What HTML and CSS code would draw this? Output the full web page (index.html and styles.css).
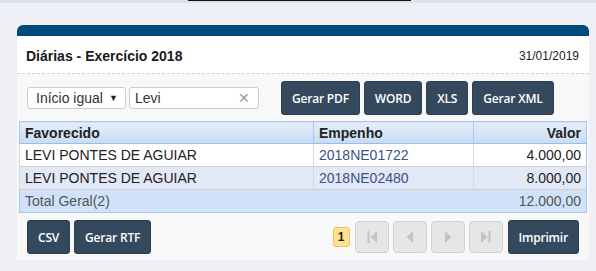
FILE: index.html
```html
<!DOCTYPE html>
<html lang="pt">
<head>
<meta charset="utf-8">
<link rel="stylesheet" href="styles.css">
</head>
<body>
<div class="topstrip"><div class="topstrip-dark"></div></div>
<div class="panel">
  <div class="panel-bar"></div>
  <div class="panel-head">
    <span class="title">Diárias - Exercício 2018</span>
    <span class="date">31/01/2019</span>
  </div>
  <div class="panel-body">
    <div class="filters">
      <div class="select"><span>Início igual</span><span class="caret">▼</span></div>
      <div class="input"><span>Levi</span><span class="clear">✕</span></div>
      <div class="btns">
        <button class="btn">Gerar PDF</button>
        <button class="btn">WORD</button>
        <button class="btn">XLS</button>
        <button class="btn">Gerar XML</button>
      </div>
    </div>
    <table class="grid">
      <thead>
        <tr><th class="c1">Favorecido</th><th class="c2">Empenho</th><th class="c3 num">Valor</th></tr>
      </thead>
      <tbody>
        <tr class="odd"><td>LEVI PONTES DE AGUIAR</td><td><a class="link">2018NE01722</a></td><td class="num">4.000,00</td></tr>
        <tr class="even"><td>LEVI PONTES DE AGUIAR</td><td><a class="link">2018NE02480</a></td><td class="num">8.000,00</td></tr>
        <tr class="total"><td colspan="2">Total Geral(2)</td><td class="num">12.000,00</td></tr>
      </tbody>
    </table>
    <div class="footer">
      <div class="btns">
        <button class="btn">CSV</button>
        <button class="btn">Gerar RTF</button>
      </div>
      <div class="pager">
        <span class="page">1</span>
        <span class="nav"><svg width="12" height="14" viewBox="0 0 12 14"><rect x="1.5" y="1" width="2" height="12" fill="#c4c4c4"/><path d="M11 1 L4.5 7 L11 13 Z" fill="#c4c4c4"/></svg></span>
        <span class="nav"><svg width="12" height="14" viewBox="0 0 12 14"><path d="M9 1 L2.5 7 L9 13 Z" fill="#c4c4c4"/></svg></span>
        <span class="nav"><svg width="12" height="14" viewBox="0 0 12 14"><path d="M3 1 L9.5 7 L3 13 Z" fill="#c4c4c4"/></svg></span>
        <span class="nav"><svg width="12" height="14" viewBox="0 0 12 14"><path d="M1 1 L7.5 7 L1 13 Z" fill="#c4c4c4"/><rect x="8.5" y="1" width="2" height="12" fill="#c4c4c4"/></svg></span>
        <button class="btn print">Imprimir</button>
      </div>
    </div>
  </div>
</div>
</body>
</html>
```
FILE: styles.css
```css
* { box-sizing: border-box; }
html, body { margin: 0; padding: 0; }
body {
  background: #eff0f6;
  font-family: "Liberation Sans", Arial, sans-serif;
  color: #222;
  width: 596px;
  height: 271px;
  overflow: hidden;
}
.topstrip {
  height: 3px;
  background: #d9e2ef;
  padding-left: 188px;
}
.topstrip-dark {
  width: 223px;
  height: 1px;
  background: #111;
}
.panel {
  margin: 22px 0 0 17px;
  width: 572px;
}
.panel-bar {
  height: 11px;
  background: #004b7c;
  border-radius: 6px 6px 0 0;
}
.panel-head {
  background: #fff;
  height: 38px;
  display: flex;
  align-items: center;
  justify-content: space-between;
  padding: 2px 10px 0 9px;
  border-bottom: 1px dashed #d0d0d0;
}
.title {
  font-weight: bold;
  font-size: 14px;
  color: #1a1a1a;
}
.date {
  font-size: 12px;
  color: #222;
}
.panel-body {
  background: #f8f8f8;
  padding: 7px 10px 6px 10px;
}
.filters {
  display: flex;
  align-items: center;
}
.select {
  width: 99px;
  height: 22px;
  background: #fff;
  border: 1px solid #ccc;
  border-radius: 3px;
  display: flex;
  align-items: center;
  justify-content: space-between;
  padding: 0 7px 0 8px;
  font-size: 14px;
  color: #333;
}
.caret { font-size: 9px; color: #222; }
.input {
  margin-left: 3px;
  width: 130px;
  height: 22px;
  background: #fff;
  border: 1px solid #ccc;
  border-radius: 3px;
  display: flex;
  align-items: center;
  justify-content: space-between;
  padding: 0 8px 0 5px;
  font-size: 14px;
  color: #333;
}
.clear { color: #999; font-size: 14px; }
.btns {
  display: flex;
  gap: 4px;
}
.filters .btns { margin-left: 22px; }
.btn {
  height: 34px;
  padding: 0 10px;
  background: #34495e;
  color: #fff;
  border: 1px solid #2c3e50;
  border-radius: 3px;
  font-family: "Open Sans", sans-serif;
  font-weight: 600;
  font-size: 12px;
  letter-spacing: -0.2px;
}
.grid {
  margin: 6px -8px 0 -8px;
  width: calc(100% + 16px);
  border-collapse: collapse;
  font-size: 14px;
  border: 1px solid #a9c8ec;
}
.grid th {
  height: 22px;
  background: linear-gradient(#e4eefa, #c8dbf3);
  text-align: left;
  font-weight: bold;
  color: #222;
  padding: 0 5px;
  border: 1px solid #a9c8ec;
  border-bottom: 1px solid #9bbde6;
}
.grid td {
  height: 23px;
  padding: 0 5px;
  border-left: 1px solid #d8d8d8;
  border-bottom: 1px solid #cdcdcd;
}
.grid .c1 { width: 294px; }
.grid .c2 { width: 160px; }
.grid .num { text-align: right; }
.odd td { background: #fff; }
.even td { background: #e2e8f5; }
.total td {
  background: #cfe2f9;
  color: #555;
  border-left: none;
  border-bottom: none;
}
.link { color: #3a5089; text-decoration: none; }
.footer {
  margin-top: 7px;
  display: flex;
  justify-content: space-between;
  align-items: center;
}
.pager {
  display: flex;
  align-items: center;
}
.page {
  width: 17px;
  height: 20px;
  background: #ffe38f;
  border: 1px solid #f0c060;
  border-radius: 3px;
  font-size: 12px;
  font-weight: bold;
  display: flex;
  align-items: center;
  justify-content: center;
  margin-right: 5px;
  color: #222;
}
.nav {
  width: 34px;
  height: 32px;
  background: #e6e6e6;
  border: 1px solid #d0d0d0;
  border-radius: 4px;
  display: flex;
  align-items: center;
  justify-content: center;
  margin-right: 4px;
}
.print { margin-left: 1px; }
```
